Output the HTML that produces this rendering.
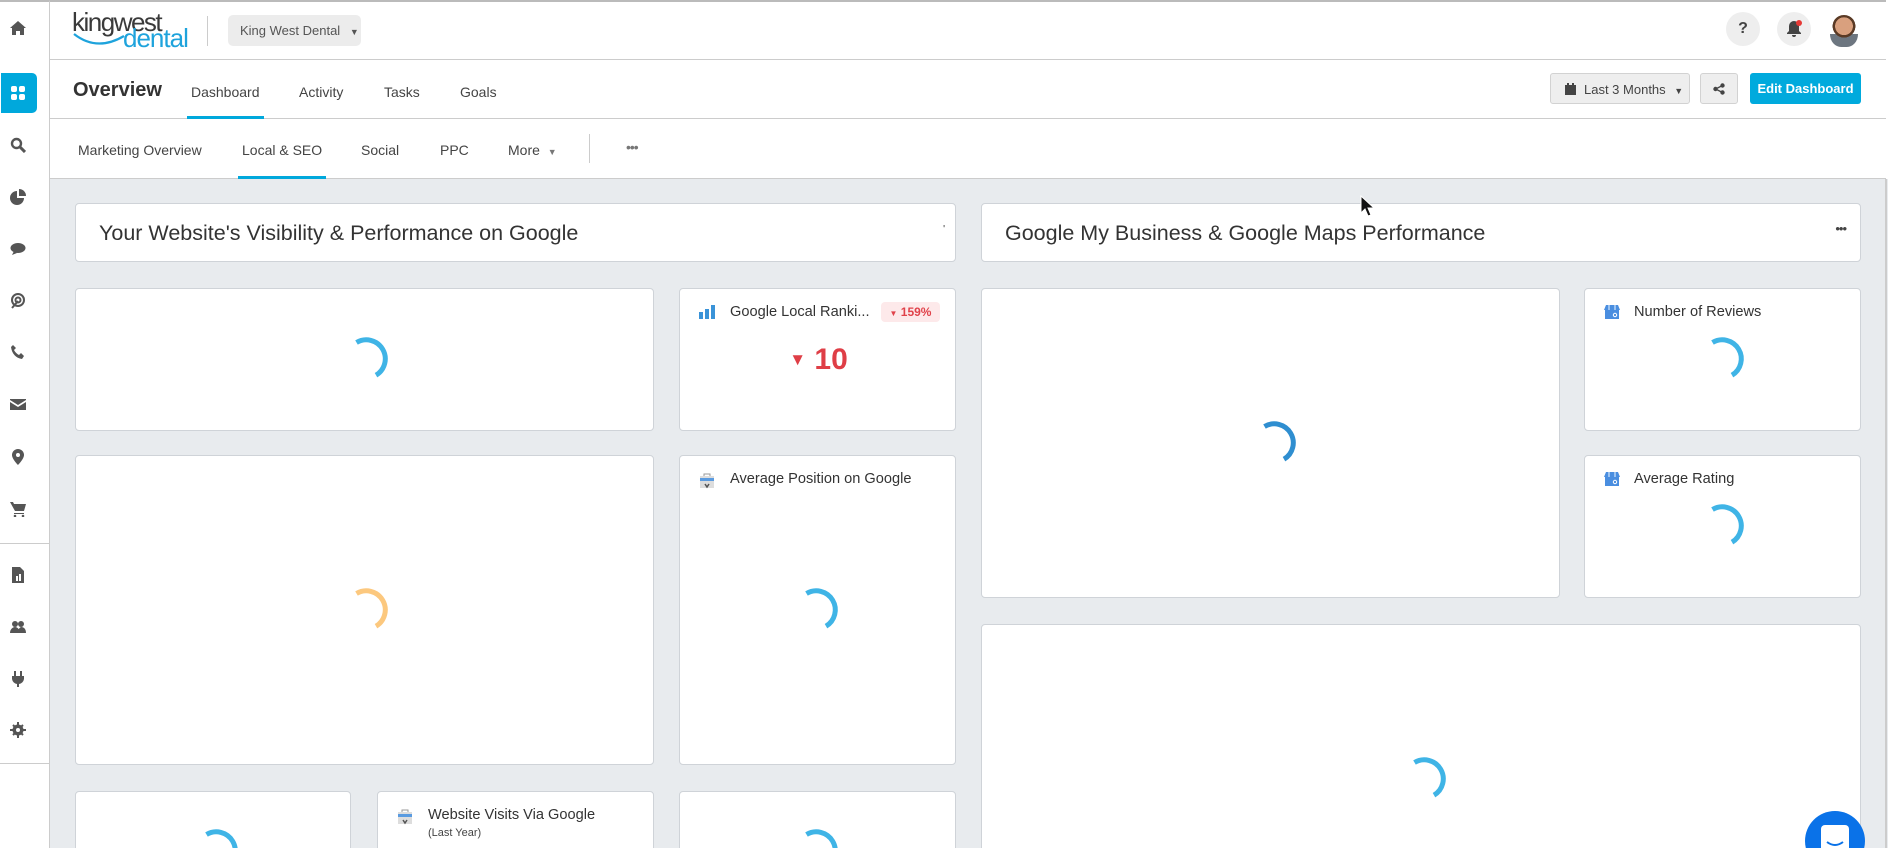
<!DOCTYPE html>
<html><head><meta charset="utf-8"><style>
*{box-sizing:border-box;margin:0;padding:0}
html,body{width:1888px;height:848px;overflow:hidden}
body{background:#fff;font-family:"Liberation Sans",Arial,sans-serif;color:#333}
#wrap{position:relative;width:1888px;height:848px;overflow:hidden}
.abs{position:absolute}
.side{left:0;top:0;width:50px;height:848px;border-right:1px solid #ccc;background:#fff;border-top:2px solid #bbb}
.ic{position:absolute;left:10px;width:16px;height:16px;fill:#555}
.top{left:50px;top:0;width:1836px;height:60px;border-bottom:1px solid #ccc;border-top:2px solid #bbb}
.nav{left:50px;top:60px;width:1836px;height:59px;border-bottom:1px solid #ccc}
.sub{left:50px;top:119px;width:1836px;height:60px;border-bottom:1px solid #ccc}
.content{left:50px;top:179px;width:1838px;height:669px;background:#e8ebee;overflow:hidden}
.card{position:absolute;background:#fff;border:1px solid #cfd3d8;border-radius:4px}
.t{position:absolute;font-size:14.6px;color:#333;white-space:nowrap}
.sp{position:absolute;width:50px;height:50px}
.btn{position:absolute;border:1px solid #d2d2d2;background:#eee;border-radius:3px;font-size:13px;color:#444}
</style></head><body><div id="wrap">
<div class="abs side">
 <svg class="ic" style="top:18px" viewBox="0 0 16 16"><path d="M8 1L0 8h2v7h4v-4h4v4h4V8h2z"/></svg>
 <div class="abs" style="left:1px;top:71px;width:36px;height:40px;background:#00a8dc;border-radius:0 5px 5px 0"></div>
 <svg class="ic" style="top:83px;fill:#fff" viewBox="0 0 16 16"><rect x="1" y="1" width="6" height="6" rx="2"/><rect x="9" y="1" width="6" height="6" rx="2"/><rect x="1" y="9" width="6" height="6" rx="2"/><rect x="9" y="9" width="6" height="6" rx="2"/></svg>
 <svg class="ic" style="top:135px" viewBox="0 0 16 16"><circle cx="6.5" cy="6.5" r="4.5" fill="none" stroke="#555" stroke-width="2.4"/><path d="M10 10l5 5" stroke="#555" stroke-width="3"/></svg>
 <svg class="ic" style="top:187px" viewBox="0 0 16 16"><path d="M7 2a7 7 0 1 0 7 7H7z"/><path d="M9 0v7h7a7 7 0 0 0-7-7z"/></svg>
 <svg class="ic" style="top:239px" viewBox="0 0 16 16"><ellipse cx="8" cy="7" rx="7.5" ry="5"/><path d="M2 14l2-4 3 2z"/></svg>
 <svg class="ic" style="top:291px" viewBox="0 0 16 16"><circle cx="8" cy="7" r="6" fill="none" stroke="#555" stroke-width="2"/><circle cx="8" cy="7" r="2.5" fill="none" stroke="#555" stroke-width="2"/><path d="M2 15l6-7" stroke="#555" stroke-width="2"/></svg>
 <svg class="ic" style="top:342px" viewBox="0 0 16 16"><path d="M3 1l3 3-2 2c1 2 3 4 5 5l2-2 3 3-2 3C6 14 2 10 1 3z"/></svg>
 <svg class="ic" style="top:394px" viewBox="0 0 16 16"><path d="M0 3h16v1L8 9 0 4zM0 6l8 5 8-5v8H0z"/></svg>
 <svg class="ic" style="top:447px" viewBox="0 0 16 16"><path d="M8 0a6 6 0 0 0-6 6c0 4 6 10 6 10s6-6 6-10a6 6 0 0 0-6-6zm0 4a2 2 0 1 1 0 4 2 2 0 0 1 0-4z"/></svg>
 <svg class="ic" style="top:499px" viewBox="0 0 16 16"><path d="M0 1h3l1 2h12l-2 7H5zM4 12h10v1H4z"/><circle cx="5" cy="15" r="1.3"/><circle cx="13" cy="15" r="1.3"/></svg>
 <div class="abs" style="left:0;top:541px;width:49px;height:1px;background:#ccc"></div>
 <svg class="ic" style="top:565px" viewBox="0 0 16 16"><path d="M2 0h8l4 4v12H2z"/><rect x="6" y="9" width="2" height="5" fill="#fff"/><rect x="9" y="7" width="2" height="7" fill="#fff"/></svg>
 <svg class="ic" style="top:617px" viewBox="0 0 16 16"><circle cx="5" cy="5" r="3"/><circle cx="11" cy="5" r="3"/><path d="M0 14c0-4 3-6 5-6s5 2 5 6zM8 14c0-3 1-5 3-6 3 0 5 2 5 6z"/></svg>
 <svg class="ic" style="top:669px" viewBox="0 0 16 16"><rect x="4" y="0" width="2" height="5"/><rect x="10" y="0" width="2" height="5"/><path d="M2 5h12v3a6 6 0 0 1-5 5v3H7v-3a6 6 0 0 1-5-5z"/></svg>
 <svg class="ic" style="top:720px" viewBox="0 0 16 16"><circle cx="8" cy="8" r="5.5"/><path d="M7 0h2v16H7zM0 7h16v2H0z" /><path d="M2.3 3.7l1.4-1.4 10 10-1.4 1.4zM12.3 2.3l1.4 1.4-10 10-1.4-1.4z"/><circle cx="8" cy="8" r="2" fill="#fff"/></svg>
 <div class="abs" style="left:0;top:761px;width:49px;height:1px;background:#ccc"></div>
</div>

<div class="abs top">
 <div class="abs" style="left:22px;top:5px;font-size:26px;color:#3a3a3a;letter-spacing:-1.5px;font-weight:300">kingwest</div>
 <div class="abs" style="left:73px;top:21px;font-size:26px;color:#1ea3dc;letter-spacing:-1px">dental</div>
 <svg class="abs" style="left:22px;top:28px" width="56" height="20"><path d="M2 4 Q25 22 52 6" fill="none" stroke="#1ea3dc" stroke-width="2.2"/></svg>
 <div class="abs" style="left:157px;top:14px;width:1px;height:30px;background:#ccc"></div>
 <div class="abs" style="left:178px;top:13px;width:133px;height:31px;background:#ececec;border-radius:5px;font-size:13px;color:#555;padding:8px 0 0 12px">King West Dental <span style="font-size:9px;margin-left:6px">▼</span></div>
 <div class="abs" style="left:1676px;top:10px;width:34px;height:34px;border-radius:50%;background:#eee;text-align:center;line-height:34px;font-weight:bold;font-size:16px;color:#444">?</div>
 <div class="abs" style="left:1727px;top:10px;width:34px;height:34px;border-radius:50%;background:#eee"></div>
 <svg class="abs" style="left:1736px;top:18px" width="16" height="18" viewBox="0 0 16 18"><path d="M8 1a5 5 0 0 0-5 5v5l-2 2v1h14v-1l-2-2V6a5 5 0 0 0-5-5zM6 15h4a2 2 0 0 1-4 0z" fill="#444"/><circle cx="13" cy="3" r="3" fill="#e53935"/></svg>
 <div class="abs" style="left:1780px;top:13px;width:28px;height:32px;border-radius:50% 50% 40% 40%;background:radial-gradient(circle at 50% 35%,#d9a07e 0 35%,#5a3a25 36% 45%,transparent 46%),linear-gradient(#fff 60%,#6d7680 60%)"></div>
</div>

<div class="abs nav">
 <div class="abs" style="left:23px;top:19px;font-size:20px;font-weight:bold;color:#333">Overview</div>
 <div class="abs" style="left:141px;top:24px;font-size:14px;color:#444">Dashboard</div>
 <div class="abs" style="left:137px;top:56px;width:77px;height:3px;background:#00a8dc"></div>
 <div class="abs" style="left:249px;top:24px;font-size:14px;color:#444">Activity</div>
 <div class="abs" style="left:334px;top:24px;font-size:14px;color:#444">Tasks</div>
 <div class="abs" style="left:410px;top:24px;font-size:14px;color:#444">Goals</div>
 <div class="btn" style="left:1500px;top:13px;width:140px;height:31px;padding:8px 0 0 14px"><svg width="11" height="12" style="vertical-align:-1px;margin-right:8px" viewBox="0 0 11 12"><path d="M0 2h11v10H0zM2 0h2v3H2zM7 0h2v3H7z" fill="#444"/></svg>Last 3 Months <span style="font-size:9px;margin-left:5px">▼</span></div>
 <div class="btn" style="left:1650px;top:13px;width:38px;height:31px"><svg width="12" height="12" style="position:absolute;left:12px;top:9px" viewBox="0 0 12 12"><circle cx="9.5" cy="2.5" r="2.2" fill="#444"/><circle cx="2.5" cy="6" r="2.2" fill="#444"/><circle cx="9.5" cy="9.5" r="2.2" fill="#444"/><path d="M9.5 2.5L2.5 6l7 3.5" stroke="#444" stroke-width="1.3" fill="none"/></svg></div>
 <div class="abs" style="left:1700px;top:13px;width:111px;height:31px;background:#00aadd;border-radius:3px;color:#fff;font-size:13px;font-weight:bold;text-align:center;line-height:31px">Edit Dashboard</div>
</div>

<div class="abs sub">
 <div class="abs" style="left:28px;top:23px;font-size:14px;color:#444">Marketing Overview</div>
 <div class="abs" style="left:192px;top:23px;font-size:14px;color:#444">Local &amp; SEO</div>
 <div class="abs" style="left:188px;top:57px;width:88px;height:3px;background:#00a8dc"></div>
 <div class="abs" style="left:311px;top:23px;font-size:14px;color:#444">Social</div>
 <div class="abs" style="left:390px;top:23px;font-size:14px;color:#444">PPC</div>
 <div class="abs" style="left:458px;top:23px;font-size:14px;color:#444">More <span style="font-size:9px;color:#777;margin-left:4px">▼</span></div>
 <div class="abs" style="left:539px;top:15px;width:1px;height:29px;background:#ccc"></div>
 <div class="abs" style="left:576px;top:20px;font-size:14px;color:#777;letter-spacing:-1px">•••</div>
</div>

<div class="abs content">
 <div class="abs" style="left:1835px;top:0;width:2px;height:669px;background:#ccc"></div>
 <div class="card" style="left:25px;top:24px;width:881px;height:59px"><div class="t" style="left:23px;top:17px;font-size:21.5px">Your Website's Visibility &amp; Performance on Google</div><div class="abs" style="right:10px;top:20px;font-size:10px">'</div></div>
 <div class="card" style="left:931px;top:24px;width:880px;height:59px"><div class="t" style="left:23px;top:17px;font-size:21.5px">Google My Business &amp; Google Maps Performance</div><div class="abs" style="right:14px;top:17px;font-size:13px;letter-spacing:-1px;color:#444">•••</div></div>

 <div class="card" style="left:25px;top:109px;width:579px;height:143px"></div>
 <div class="card" style="left:629px;top:109px;width:277px;height:143px">
  <svg class="abs" style="left:19px;top:15px" width="16" height="16"><rect x="0" y="8" width="4" height="7" fill="#3a93d8"/><rect x="6" y="5" width="4" height="10" fill="#3a93d8"/><rect x="12" y="1" width="4" height="14" fill="#3a93d8"/></svg>
  <div class="t" style="left:50px;top:15px">Google Local Ranki...</div>
  <div class="abs" style="left:201px;top:13px;width:59px;height:20px;background:#fde9ea;border-radius:4px;color:#e0424a;font-size:12px;font-weight:bold;line-height:20px;text-align:center"><span style="font-size:8px">▼</span> 159%</div>
  <div class="abs" style="left:0;top:54px;width:277px;text-align:center;color:#df3e46;font-weight:bold;font-size:30px"><span style="font-size:17px;vertical-align:4px">▼</span> 10</div>
 </div>
 <div class="card" style="left:25px;top:276px;width:579px;height:310px"></div>
 <div class="card" style="left:629px;top:276px;width:277px;height:310px">
  <svg class="abs" style="left:19px;top:17px" width="16" height="16"><rect x="1" y="3" width="14" height="12" fill="#ddd"/><rect x="1" y="5" width="14" height="3" fill="#5a9be0"/><path d="M5 3V1h6v2" stroke="#999" fill="none"/><path d="M6 11l2 3 2-3" stroke="#555" fill="none" stroke-width="1.5"/></svg>
  <div class="t" style="left:50px;top:15px">Average Position on Google</div>
 </div>
 <div class="card" style="left:25px;top:612px;width:276px;height:100px"></div>
 <div class="card" style="left:327px;top:612px;width:277px;height:100px">
  <svg class="abs" style="left:19px;top:17px" width="16" height="16"><rect x="1" y="3" width="14" height="12" fill="#ddd"/><rect x="1" y="5" width="14" height="3" fill="#5a9be0"/><path d="M5 3V1h6v2" stroke="#999" fill="none"/><path d="M6 11l2 3 2-3" stroke="#555" fill="none" stroke-width="1.5"/></svg>
  <div class="t" style="left:50px;top:15px">Website Visits Via Google</div>
  <div class="t" style="left:50px;top:35px;font-size:11px;color:#444">(Last Year)</div>
 </div>
 <div class="card" style="left:629px;top:612px;width:277px;height:100px"></div>

 <div class="card" style="left:931px;top:109px;width:579px;height:310px"></div>
 <div class="card" style="left:1534px;top:109px;width:277px;height:143px">
  <svg class="abs" style="left:19px;top:15px" width="16" height="16"><path d="M2 1h12l2 5H0z" fill="#4a8ee0"/><path d="M5 1v5M11 1v5" stroke="#9cc3f0" stroke-width="2"/><rect x="1" y="6" width="14" height="9" fill="#4a8ee0"/><circle cx="11" cy="11" r="1.7" fill="none" stroke="#fff"/></svg>
  <div class="t" style="left:49px;top:15px">Number of Reviews</div>
 </div>
 <div class="card" style="left:1534px;top:276px;width:277px;height:143px">
  <svg class="abs" style="left:19px;top:15px" width="16" height="16"><path d="M2 1h12l2 5H0z" fill="#4a8ee0"/><path d="M5 1v5M11 1v5" stroke="#9cc3f0" stroke-width="2"/><rect x="1" y="6" width="14" height="9" fill="#4a8ee0"/><circle cx="11" cy="11" r="1.7" fill="none" stroke="#fff"/></svg>
  <div class="t" style="left:49px;top:15px">Average Rating</div>
 </div>
 <div class="card" style="left:931px;top:445px;width:880px;height:300px"></div>

 <svg class="sp" style="left:291px;top:155px" viewBox="-25 -25 50 50"><path d="M-9.5 -16.5 A19 19 0 0 1 10 16.2" fill="none" stroke="#3fb4e6" stroke-width="5"/></svg>
 <svg class="sp" style="left:291px;top:406px" viewBox="-25 -25 50 50"><path d="M-9.5 -16.5 A19 19 0 0 1 10 16.2" fill="none" stroke="#fcc87e" stroke-width="5"/></svg>
 <svg class="sp" style="left:741px;top:406px" viewBox="-25 -25 50 50"><path d="M-9.5 -16.5 A19 19 0 0 1 10 16.2" fill="none" stroke="#3fb4e6" stroke-width="5"/></svg>
 <svg class="sp" style="left:1199px;top:239px" viewBox="-25 -25 50 50"><path d="M-9.5 -16.5 A19 19 0 0 1 10 16.2" fill="none" stroke="#2f8ed0" stroke-width="5"/></svg>
 <svg class="sp" style="left:1647px;top:155px" viewBox="-25 -25 50 50"><path d="M-9.5 -16.5 A19 19 0 0 1 10 16.2" fill="none" stroke="#3fb4e6" stroke-width="5"/></svg>
 <svg class="sp" style="left:1647px;top:322px" viewBox="-25 -25 50 50"><path d="M-9.5 -16.5 A19 19 0 0 1 10 16.2" fill="none" stroke="#3fb4e6" stroke-width="5"/></svg>
 <svg class="sp" style="left:1349px;top:575px" viewBox="-25 -25 50 50"><path d="M-9.5 -16.5 A19 19 0 0 1 10 16.2" fill="none" stroke="#3fb4e6" stroke-width="5"/></svg>
 <svg class="sp" style="left:141px;top:647px" viewBox="-25 -25 50 50"><path d="M-9.5 -16.5 A19 19 0 0 1 10 16.2" fill="none" stroke="#3fb4e6" stroke-width="5"/></svg>
 <svg class="sp" style="left:741px;top:647px" viewBox="-25 -25 50 50"><path d="M-9.5 -16.5 A19 19 0 0 1 10 16.2" fill="none" stroke="#3fb4e6" stroke-width="5"/></svg>

 <div class="abs" style="left:1755px;top:632px;width:60px;height:60px;border-radius:50%;background:#0a72e8"></div>
 <div class="abs" style="left:1771px;top:646px;width:28px;height:30px;border-radius:4px;background:#fff"></div>
 <svg class="abs" style="left:1775px;top:661px" width="20" height="8"><path d="M2 2Q10 8 18 2" stroke="#0a72e8" stroke-width="2" fill="none"/></svg>
</div>

<svg class="abs" style="left:1360px;top:195px" width="16" height="22" viewBox="0 0 16 22"><path d="M1 1v17l4-4 3 7 3-1-3-7h6z" fill="#111" stroke="#fff" stroke-width="1"/></svg>
</div></body></html>
